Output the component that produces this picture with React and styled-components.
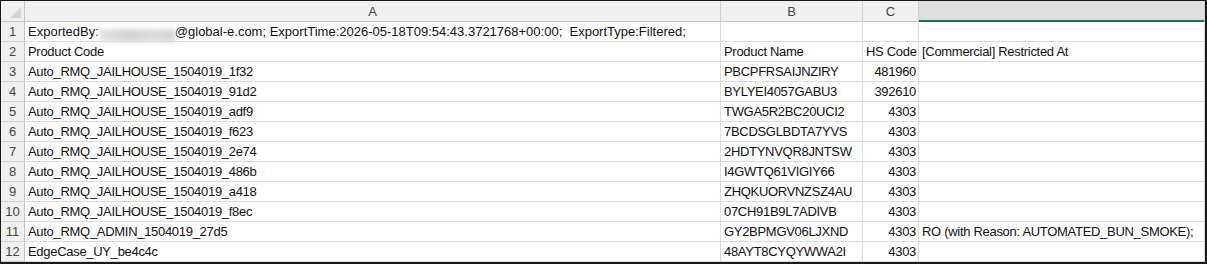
import React from "react";
import styled, { createGlobalStyle } from "styled-components";

const GlobalStyle = createGlobalStyle`
  html, body { margin: 0; padding: 0; background: #ffffff; }
  body { font-family: "Liberation Sans", Arial, sans-serif; }
`;

const rows = [
  ["Product Code", "Product Name", "HS Code", "[Commercial] Restricted At"],
  ["Auto_RMQ_JAILHOUSE_1504019_1f32", "PBCPFRSAIJNZIRY", "481960", ""],
  ["Auto_RMQ_JAILHOUSE_1504019_91d2", "BYLYEI4057GABU3", "392610", ""],
  ["Auto_RMQ_JAILHOUSE_1504019_adf9", "TWGA5R2BC20UCI2", "4303", ""],
  ["Auto_RMQ_JAILHOUSE_1504019_f623", "7BCDSGLBDTA7YVS", "4303", ""],
  ["Auto_RMQ_JAILHOUSE_1504019_2e74", "2HDTYNVQR8JNTSW", "4303", ""],
  ["Auto_RMQ_JAILHOUSE_1504019_486b", "I4GWTQ61VIGIY66", "4303", ""],
  ["Auto_RMQ_JAILHOUSE_1504019_a418", "ZHQKUORVNZSZ4AU", "4303", ""],
  ["Auto_RMQ_JAILHOUSE_1504019_f8ec", "07CH91B9L7ADIVB", "4303", ""],
  ["Auto_RMQ_ADMIN_1504019_27d5", "GY2BPMGV06LJXND", "4303", "RO (with Reason: AUTOMATED_BUN_SMOKE);"],
  ["EdgeCase_UY_be4c4c", "48AYT8CYQYWWA2I", "4303", ""],
];

export default function App() {
  return (
    <>
      <GlobalStyle />
      <Sheet>
        <Corner>
          <CornerMark />
        </Corner>
        <ColHead>A</ColHead>
        <ColHead>B</ColHead>
        <ColHead>C</ColHead>
        <ColHead $selected />

        <RowHead>1</RowHead>
        <Cell $loose>
          ExportedBy: <Redacted />@global-e.com; ExportTime:2026-05-18T09:54:43.3721768+00:00;&nbsp; ExportType:Filtered;
        </Cell>
        <Cell />
        <Cell />
        <Cell />

        {rows.map((r, i) => (
          <React.Fragment key={i}>
            <RowHead>{i + 2}</RowHead>
            <Cell>{r[0]}</Cell>
            <Cell>{r[1]}</Cell>
            <Cell $num={i > 0}>{r[2]}</Cell>
            <Cell>{r[3]}</Cell>
          </React.Fragment>
        ))}
      </Sheet>
    </>
  );
}

const Sheet = styled.div`
  width: 1207px;
  height: 264px;
  box-sizing: border-box;
  border-top: 1px solid #1a1a1a;
  border-left: 1px solid #1a1a1a;
  border-right: 2px solid #1a1a1a;
  border-bottom: 2px solid #1a1a1a;
  display: grid;
  grid-template-columns: 24px 696px 142px 56px 1fr;
  grid-template-rows: 21px repeat(12, 20px);
  overflow: hidden;
`;

const Corner = styled.div`
  background: #f0f0f0;
  border-right: 1px solid #c4c4c4;
  border-bottom: 1px solid #c4c4c4;
  position: relative;
`;

const CornerMark = styled.div`
  position: absolute;
  right: 3px;
  bottom: 3px;
  width: 0;
  height: 0;
  border-left: 11px solid transparent;
  border-bottom: 11px solid #d4d4d4;
`;

const ColHead = styled.div`
  background: ${(p) => (p.$selected ? "#dedede" : "#f0f0f0")};
  border-right: 1px solid #d0d0d0;
  border-bottom: ${(p) => (p.$selected ? "2px solid #217346" : "1px solid #c4c4c4")};
  color: #444444;
  font-size: 13px;
  display: flex;
  align-items: center;
  justify-content: center;
  padding-top: 1px;
  box-sizing: border-box;
`;

const RowHead = styled.div`
  background: #f0f0f0;
  border-right: 1px solid #c4c4c4;
  border-bottom: 1px solid #d0d0d0;
  color: #444444;
  font-size: 13px;
  display: flex;
  align-items: center;
  justify-content: center;
  box-sizing: border-box;
`;

const Cell = styled.div`
  border-right: 1px solid #dcdcdc;
  border-bottom: 1px solid #dcdcdc;
  color: #111111;
  font-size: 13px;
  letter-spacing: ${(p) => (p.$loose ? "0" : "-0.3px")};
  line-height: 16px;
  white-space: nowrap;
  display: flex;
  align-items: flex-end;
  justify-content: ${(p) => (p.$num ? "flex-end" : "flex-start")};
  padding: 0 2px 1px 3px;
  box-sizing: border-box;
`;

const Redacted = styled.span`
  display: inline-block;
  width: 76px;
  height: 13px;
  margin-bottom: -2px;
  background: linear-gradient(90deg, #e4e4e4, #d2d2d2 40%, #dcdcdc 70%, #d4d4d4);
  filter: blur(2.5px);
`;
